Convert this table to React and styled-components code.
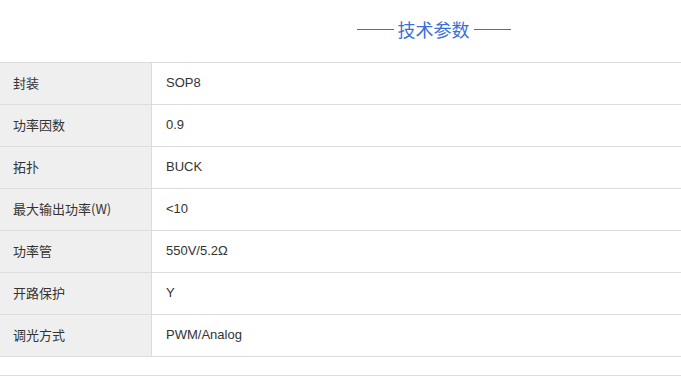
import React from 'react';
import styled, { createGlobalStyle } from 'styled-components';

const GlobalStyle = createGlobalStyle`
  html, body {
    margin: 0;
    padding: 0;
    background: #fff;
  }
  body {
    font-family: "Liberation Sans", Arial, "Noto Sans CJK SC", sans-serif;
  }
`;

const Section = styled.section`
  width: 681px;
`;

const Heading = styled.h3`
  margin: 0;
  height: 62px;
  padding-left: 186px;
  display: flex;
  align-items: center;
  justify-content: center;
  gap: 4px;
  font-size: 18px;
  font-weight: normal;
  color: #3a6fd8;
  font-family: "Microsoft YaHei", "Noto Sans CJK SC", sans-serif;
  box-sizing: border-box;
  padding-bottom: 4px;
`;

const Dash = styled.span`
  display: inline-block;
  width: 37px;
  height: 1px;
  background: #3a6fd8;
`;

const Table = styled.div`
  border-top: 1px solid #dcdcdc;
`;

const Row = styled.div`
  display: grid;
  grid-template-columns: 152px 1fr;
  height: 42px;
  border-bottom: 1px solid #dcdcdc;
  box-sizing: border-box;
`;

const Label = styled.div`
  background: #efefef;
  border-right: 1px solid #dcdcdc;
  padding-left: 13px;
  padding-bottom: 2px;
  display: flex;
  align-items: center;
  font-size: 13px;
  color: #333;
  font-family: "Microsoft YaHei", "Noto Sans CJK SC", sans-serif;
`;

const Value = styled.div`
  padding-left: 14px;
  padding-bottom: 2px;
  display: flex;
  align-items: center;
  font-size: 13px;
  color: #333;
  font-family: "Liberation Sans", Arial, "Noto Sans CJK SC", sans-serif;
`;

const Footer = styled.div`
  height: 18px;
  border-bottom: 1px solid #dcdcdc;
`;

const specs = [
  ['封装', 'SOP8'],
  ['功率因数', '0.9'],
  ['拓扑', 'BUCK'],
  ['最大输出功率(W)', '<10'],
  ['功率管', '550V/5.2Ω'],
  ['开路保护', 'Y'],
  ['调光方式', 'PWM/Analog'],
];

export default function App() {
  return (
    <Section>
      <GlobalStyle />
      <Heading>
        <Dash />
        技术参数
        <Dash />
      </Heading>
      <Table>
        {specs.map(([k, v]) => (
          <Row key={k}>
            <Label>{k}</Label>
            <Value>{v}</Value>
          </Row>
        ))}
      </Table>
      <Footer />
    </Section>
  );
}
